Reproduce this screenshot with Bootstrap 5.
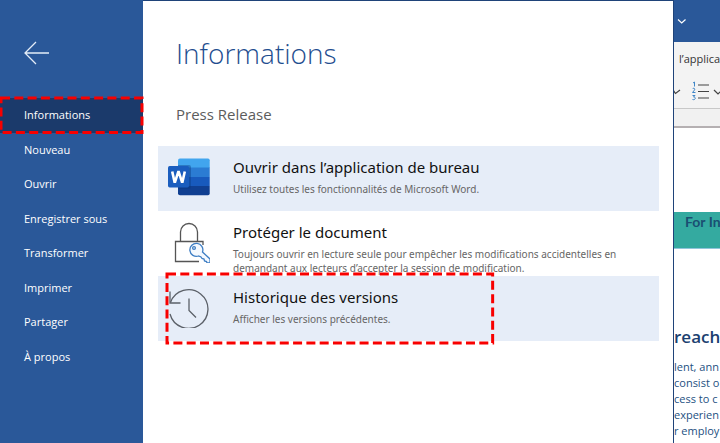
<!DOCTYPE html>
<html lang="fr">
<head>
<meta charset="utf-8">
<meta name="viewport" content="width=device-width, initial-scale=1">
<title>Informations - Press Release</title>
<link rel="stylesheet" href="https://cdn.jsdelivr.net/npm/bootstrap@5.3.0/dist/css/bootstrap.min.css">
<style>
  body { font-family: "Open Sans", "Noto Sans", sans-serif; background: #fff; }
  .side { flex: 0 0 143px; background: #2a5899; }
  .side-back { padding: 40px 0 32px 24px; line-height: 0; }
  .side-list { display: grid; grid-auto-rows: 1fr; height: 276px; }
  .side-item { padding-left: 24px; font-size: 11px; line-height: 34px; color: #fff; text-decoration: none; }
  .side-item:hover { background: #1b3a6b; color: #fff; }
  .side-item.current { position: relative; background: #1b3a6b; }
  .pane { min-width: 0; padding: 0 14px 0 15px; background: #fff; border: solid #1f4379; border-width: 1px 1px 0 0; }
  .pane-title { margin: 0; padding: 31px 18px 0; font-size: 28px; line-height: 42px; font-weight: 300; color: #1f4e8f; }
  .pane-file { margin: 0; padding: 28px 18px 0; font-size: 15px; line-height: 24px; color: #5c5c5c; }
  .choices { margin-top: 20px; }
  .choice { position: relative; gap: 23px; height: 65px; margin: 0; padding: 10px; border: 0; background: #fff; text-align: left; font-family: "Noto Sans", sans-serif; }
  .choice.tinted { background: #e6edf8; }
  .choice svg.pic { flex: 0 0 42px; }
  .choice-name { display: block; font-size: 15px; line-height: 22px; color: #111; }
  .choice-note { display: block; font-size: 10px; line-height: 14px; margin-top: 4px; color: #666; }
  .ring { position: absolute; pointer-events: none; overflow: visible; fill: none; stroke: #f80000; stroke-width: 3; stroke-dasharray: 9 4.3; z-index: 2; }
  .ring-nav { left: 1px; top: 0; width: calc(100% - 2px); height: 100%; }
  .ring-choice { left: 9px; top: -2px; width: 65%; height: 69px; }
  .sheet { flex: 0 0 46px; overflow: hidden; color: #24507f; }
  .sheet-top { height: 42px; padding: 16px 0 0 3px; background: #2a5899; line-height: 0; }
  .sheet-ribbon { height: 67px; padding-top: 7px; background: #f3f3f3; border-bottom: 1px solid #c8c8c8; }
  .sheet-search { padding-left: 5px; font-size: 11px; line-height: 20px; color: #333; }
  .sheet-gap { height: 19px; background: #f1f1f1; border-bottom: 2px solid #b5b0b2; }
  .sheet-band { margin-top: 84px; height: 37px; padding-left: 11px; background: #34aaa0; border-bottom: 1px solid #8fc5da; font: 700 14px/19px Lato, sans-serif; color: #1a4f72; }
  .sheet-head { margin: 76px 0 0; font-size: 17px; line-height: 24px; font-weight: 600; color: #1b3f70; }
  .sheet-text { margin: 10px 0 0; font-size: 11px; line-height: 16px; }
</style>
<script src="https://cdn.jsdelivr.net/npm/bootstrap@5.3.0/dist/js/bootstrap.bundle.min.js"></script>
</head>
<body>
<div class="d-flex vh-100 overflow-hidden">
  <nav class="side" aria-label="Fichier">
    <div class="side-back">
      <button type="button" class="btn p-0 border-0 lh-1 d-block" aria-label="Retour">
        <svg width="26" height="26" viewBox="0 0 26 26" fill="none" stroke="#e4edf8" stroke-width="1.3" class="d-block"><path d="M25 13H1M12 2L1 13l11 11"/></svg>
      </button>
    </div>
    <div class="side-list">
      <a class="side-item current" href="#" aria-current="page">Informations
        <svg class="ring ring-nav" aria-hidden="true"><rect width="100%" height="100%"/></svg></a>
      <a class="side-item" href="#">Nouveau</a>
      <a class="side-item" href="#">Ouvrir</a>
      <a class="side-item" href="#">Enregistrer sous</a>
      <a class="side-item" href="#">Transformer</a>
      <a class="side-item" href="#">Imprimer</a>
      <a class="side-item" href="#">Partager</a>
      <a class="side-item" href="#">À propos</a>
    </div>
  </nav>

  <main class="pane flex-grow-1">
    <h1 class="pane-title">Informations</h1>
    <p class="pane-file">Press Release</p>
    <div class="choices d-flex flex-column">
      <button type="button" class="choice tinted d-flex align-items-start">
        <svg class="pic" width="42" height="42" viewBox="0 0 42 42" aria-hidden="true">
          <path fill="#41a5ee" d="M12 2.500h28a1.700 1.700 0 0 1 1.700 1.700V12H10V4.500a2 2 0 0 1 2-2z"/>
          <path fill="#2b7cd3" d="M10 11.500h31.700v9.500H10z"/>
          <path fill="#185abd" d="M10 21h31.700v9H10z"/>
          <path fill="#103f91" d="M10 30h31.700v7.500a1.700 1.700 0 0 1-1.700 1.700H12a2 2 0 0 1-2-2z"/>
          <path fill="#0b3a80" opacity=".4" d="M10 9h11a2 2 0 0 1 2 2v20a2 2 0 0 1-2 2H10z"/>
          <rect y="10" width="21" height="21.500" rx="1.700" fill="#1a5dbe"/>
          <path fill="none" stroke="#fff" stroke-width="2.600" d="M4.200 15.500l2.300 10.300h.6L10.200 16h.6l3.100 9.800h.6L16.800 15.500"/>
        </svg>
        <span><span class="choice-name">Ouvrir dans l’application de bureau</span>
        <span class="choice-note">Utilisez toutes les fonctionnalités de Microsoft Word.</span></span>
      </button>
      <button type="button" class="choice d-flex align-items-start">
        <svg class="pic" width="42" height="42" viewBox="0 0 42 42" fill="none" aria-hidden="true">
          <g stroke="#555" stroke-width="1.300"><path d="M12.500 20.500V11a8.500 8.500 0 0 1 17 0v9.500"/><path d="M35 24v-3.500H7.500v20H31"/></g>
          <g stroke="#3e7ec4" stroke-width="1.300" fill="#f4f9ff"><path d="M34.500 31a6.500 6.500 0 1 0-4 4l2.500 1 1 1.500 2 .5.500 2 2 .5.500 1.500h3v-4z"/><circle cx="26" cy="27" r="1.400"/></g>
        </svg>
        <span><span class="choice-name">Protéger le document</span>
        <span class="choice-note">Toujours ouvrir en lecture seule pour empêcher les modifications accidentelles en<br>demandant aux lecteurs d’accepter la session de modification.</span></span>
      </button>
      <button type="button" class="choice tinted d-flex align-items-start">
        <svg class="pic" width="42" height="42" viewBox="0 0 42 42" fill="none" stroke="#5b6068" stroke-width="1.300" aria-hidden="true">
          <path d="M2.500 16.500A19.300 19.300 0 1 1 2 28"/><path d="M2 5.500v11.500h10.500M21 12.500V24.500l7 7"/>
        </svg>
        <span><span class="choice-name">Historique des versions</span>
        <span class="choice-note">Afficher les versions précédentes.</span></span>
        <svg class="ring ring-choice" aria-hidden="true"><rect width="100%" height="100%"/></svg>
      </button>
    </div>
  </main>

  <aside class="sheet text-nowrap" aria-label="Document">
    <div class="sheet-top"><svg width="10" height="10" viewBox="0 0 10 10" fill="none" stroke="#fff" stroke-width="1.200" aria-hidden="true"><path d="M1 3.500l3.700 3.500L8.500 3.500"/></svg></div>
    <div class="sheet-ribbon">
      <div class="sheet-search">l’applica</div>
      <svg class="d-block mt-2" width="46" height="30" viewBox="0 0 46 30" fill="none" stroke="#444" stroke-width="1.200" aria-hidden="true">
        <path d="M-1 13l2.500 3.500L6 13M40 13l4 4 4-4M24 8h11M24 14.500h11M24 21h11"/>
        <path stroke="#3f86c8" stroke-width="1" d="M19 6l1.500-1v4.500M18.500 12c1-1.500 3-.5 2 1l-2 2.500h3M18.500 18.500h2.500l-1.500 1.500c3 0 2 3.500-1 2.500"/>
      </svg>
    </div>
    <div class="sheet-gap"></div>
    <div class="sheet-band">For In</div>
    <h2 class="sheet-head">reach</h2>
    <p class="sheet-text">lent, ann<br>consist o<br>cess to c<br>experien<br>r employ</p>
  </aside>
</div>
</body>
</html>
